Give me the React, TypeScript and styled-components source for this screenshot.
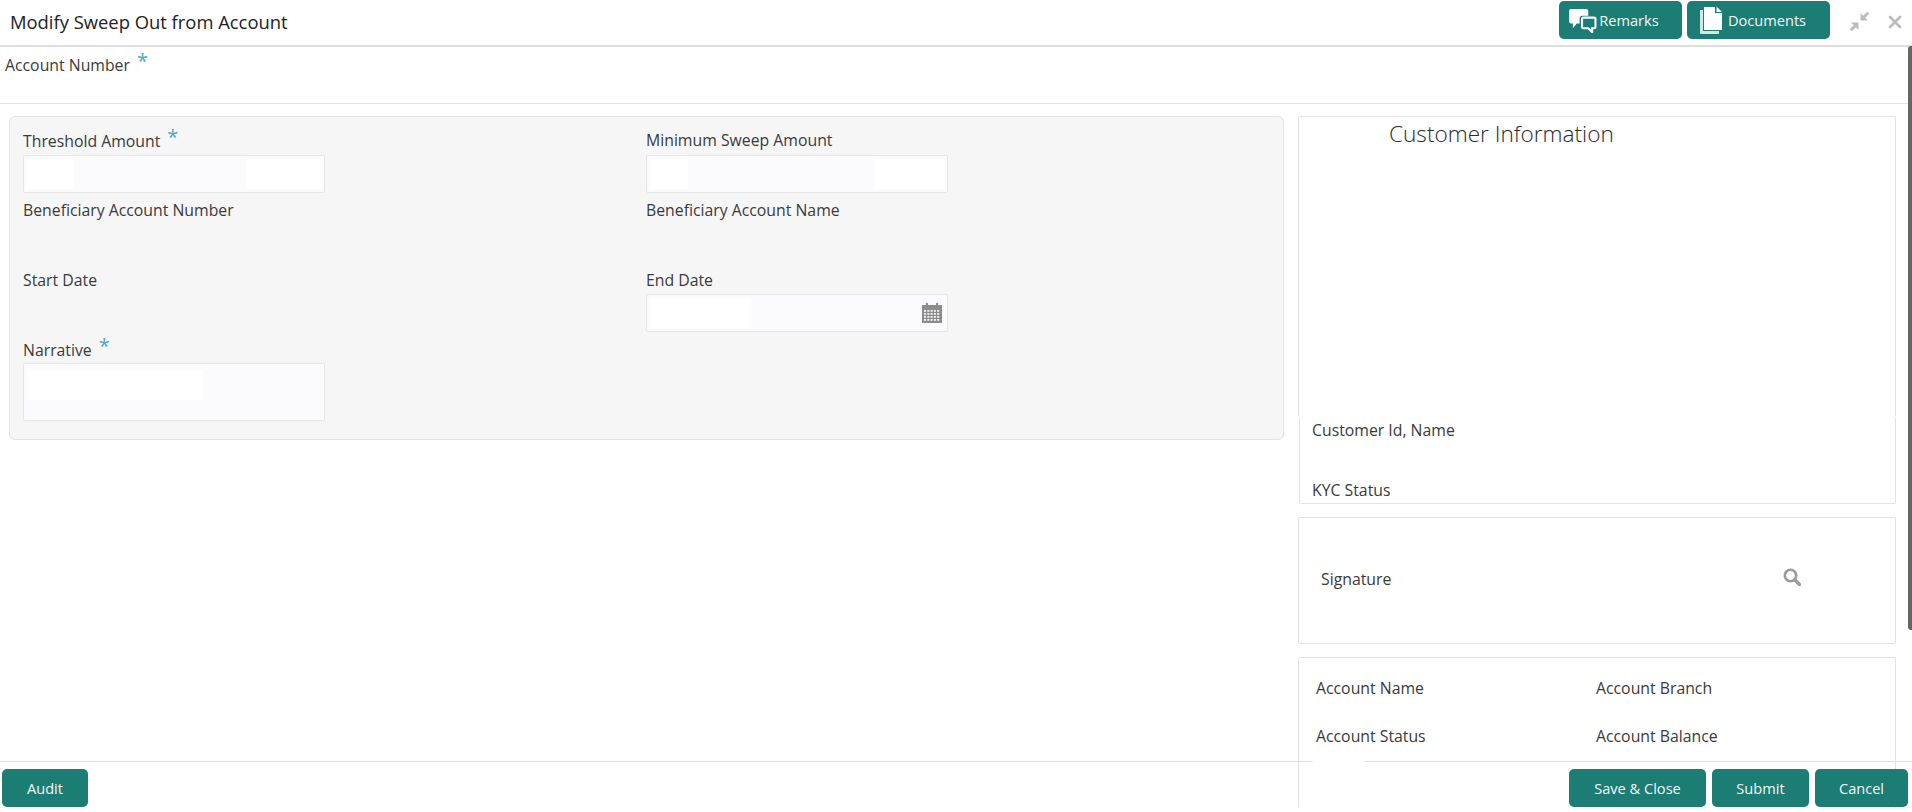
import React from "react";
import styled, { createGlobalStyle } from "styled-components";

const GlobalStyle = createGlobalStyle`
  html, body {
    margin: 0;
    padding: 0;
    height: 100%;
    background: #fff;
    overflow: hidden;
  }
  body {
    font-family: "Open Sans", "Noto Sans", sans-serif;
    color: #2c2c2c;
  }
`;

const Page = styled.div`
  position: relative;
  width: 1912px;
  height: 812px;
  overflow: hidden;
  display: flex;
  flex-direction: column;
`;

const Header = styled.header`
  height: 45px;
  flex: none;
  display: flex;
  align-items: center;
  justify-content: space-between;
  padding: 0 10px;
  border-bottom: 2px solid #dedede;
`;

const Title = styled.h1`
  margin: 0 0 2px;
  font-size: 18.4px;
  font-weight: 400;
  color: #222;
`;

const HeaderActions = styled.div`
  display: flex;
  align-items: center;
  gap: 5px;
  margin-bottom: 5px;
`;

const TealButton = styled.button<{ $w: number; $pr?: number }>`
  width: ${(p) => p.$w}px;
  height: 38px;
  border: none;
  border-radius: 5px;
  background: #1c7d75;
  color: #f1f8f7;
  font-family: inherit;
  font-size: 14.6px;
  display: flex;
  align-items: center;
  justify-content: center;
  padding: 0 ${(p) => p.$pr ?? 0}px 0 0;
`;

const WindowIcons = styled.div`
  display: flex;
  align-items: center;
  gap: 18px;
  margin-left: 14px;
  margin-top: 3px;
  color: #bcbcbc;
`;

const AccountRow = styled.div`
  height: 57px;
  flex: none;
  padding: 7px 0 0 5px;
  box-sizing: border-box;
  border-bottom: 1px solid #e4e4e4;
`;

const Label = styled.div`
  height: 20px;
  line-height: 20px;
  font-size: 15.8px;
  color: #3a3a3a;
  white-space: nowrap;
`;

const Star = styled.span`
  color: #4aa9c0;
  font-size: 20px;
  margin-left: 7px;
  position: relative;
  top: -3px;
  line-height: 1;
`;

const Main = styled.main`
  flex: 1;
  min-height: 0;
  display: flex;
  align-items: flex-start;
  gap: 14px;
  padding: 12px 0 0 9px;
`;

const Panel = styled.section`
  width: 1275px;
  flex: none;
  box-sizing: border-box;
  background: #f6f6f6;
  border: 1px solid #e3e3e3;
  border-radius: 6px;
  padding: 13px 0 18px 13px;
  display: grid;
  grid-template-columns: 623px 1fr;
  grid-template-rows: 70px 70px 69px auto;
`;

const Field = styled.div``;

const Input = styled.div<{ $bg: string; $h: number; $mt?: number }>`
  width: 302px;
  height: ${(p) => p.$h}px;
  margin-top: ${(p) => p.$mt ?? 4}px;
  box-sizing: border-box;
  border: 1px solid #e6e6e6;
  border-radius: 2px;
  background: ${(p) => p.$bg};
  display: flex;
  align-items: center;
  justify-content: flex-end;
  padding-right: 5px;
  color: #8a8a8a;
`;

const Side = styled.aside`
  width: 598px;
  flex: none;
  display: flex;
  flex-direction: column;
`;

const Card = styled.div`
  box-sizing: border-box;
  border: 1px solid #e2e2e2;
  border-radius: 2px;
  background: #fff;
`;

const InfoCard = styled(Card)`
  height: 301px;
  border-bottom: none;
  padding: 2px 0 0 90px;
`;

const InfoTitle = styled.div`
  font-size: 22.6px;
  font-weight: 300;
  line-height: 30px;
  color: #2a2a2a;
`;

const CustomerCard = styled(Card)`
  height: 87px;
  margin-left: 1px;
  border-top: none;
  padding: 0 0 0 12px;
`;

const CustomerLabel = styled(Label)<{ $top: number }>`
  margin-top: ${(p) => p.$top}px;
`;

const SignatureCard = styled(Card)`
  height: 127px;
  margin-top: 13px;
  display: flex;
  align-items: center;
  justify-content: space-between;
  padding: 0 94px 4px 22px;
`;

const SearchIcon = styled.svg`
  color: #9a9a9a;
  margin-top: -4px;
`;

const AccountCard = styled(Card)`
  height: 151px;
  margin-top: 13px;
  border-bottom: none;
  padding: 20px 0 0 17px;
  display: grid;
  grid-template-columns: 280px 1fr;
  grid-template-rows: 48px 48px;
`;

const Scrollbar = styled.div`
  position: absolute;
  top: 46px;
  right: 0;
  width: 4px;
  height: 584px;
  background: #666;
  border-radius: 3px 0 0 3px;
`;

const Footer = styled.footer`
  position: absolute;
  left: 0;
  right: 0;
  bottom: 0;
  height: 43px;
  border-top: 1px solid #dedede;
  display: flex;
  justify-content: space-between;
  padding: 7px 4px 0 2px;
`;

const FooterGroup = styled.div`
  display: flex;
  gap: 6px;
`;

// blurred-out account status value, sits over the footer rule
const ValueBlot = styled.div`
  position: absolute;
  left: 1313px;
  top: 751px;
  width: 52px;
  height: 16px;
  background: #fff;
`;

const patches = (
  base: string,
  rects: Array<[number, number, number, number]>
) =>
  [
    ...rects.map(
      ([x, y, w, h]) =>
        `linear-gradient(#fff, #fff) ${x}px ${y}px / ${w}px ${h}px no-repeat`
    ),
    `linear-gradient(${base}, ${base})`,
  ].join(", ");

function RemarksIcon() {
  return (
    <svg width="29" height="25" viewBox="0 0 30 26" style={{ marginRight: 2 }}>
      <path
        d="M3 1h16a2 2 0 0 1 2 2v5h-6a3 3 0 0 0-3 3v5H9l-4 5v-5H3a2 2 0 0 1-2-2V3a2 2 0 0 1 2-2z"
        fill="#fff"
      />
      <path
        d="M16 10h11a1.500 1.500 0 0 1 1.500 1.500v8a1.500 1.500 0 0 1-1.500 1.500h-2v4l-4-4h-5a1.500 1.500 0 0 1-1.500-1.500v-8a1.500 1.500 0 0 1 1.500-1.500z"
        fill="#1c7d75"
        stroke="#fff"
        strokeWidth="2.200"
      />
    </svg>
  );
}

function DocumentsIcon() {
  return (
    <svg width="24" height="29" viewBox="0 0 24 29" style={{ marginRight: 5 }}>
      <path d="M1 4h3v21h16v3H2a1 1 0 0 1-1-1z" fill="#cfe9e6" />
      <path d="M5 1h11v6h7v17H5z" fill="#fff" />
      <path d="M17.500 0.500l5.500 5.500h-5.500z" fill="#fff" />
    </svg>
  );
}

function CalendarIcon() {
  return (
    <svg width="20" height="20" viewBox="0 0 20 20" fill="#8c8c8c">
      <rect x="4" y="0" width="2" height="4" />
      <rect x="14" y="0" width="2" height="4" />
      <path d="M0 2h20v18H0z" />
      <g fill="#f4f4f4">
        {[0, 1, 2, 3].map((row) =>
          [0, 1, 2, 3, 4].map((col) => (
            <rect
              key={`${row}-${col}`}
              x={2 + col * 3.3}
              y={7 + row * 3}
              width="2"
              height="1.800"
            />
          ))
        )}
      </g>
    </svg>
  );
}

export default function App() {
  return (
    <Page>
      <GlobalStyle />
      <Header>
        <Title>Modify Sweep Out from Account</Title>
        <HeaderActions>
          <TealButton $w={123} $pr={14}>
            <RemarksIcon />
            Remarks
          </TealButton>
          <TealButton $w={143} $pr={12}>
            <DocumentsIcon />
            Documents
          </TealButton>
          <WindowIcons>
            <svg width="21" height="21" viewBox="0 0 20 20" fill="currentColor">
              <path d="M11 2v7h7l-2.500-2.500 3.800-3.800-2-2-3.800 3.800z" />
              <path d="M9 18v-7H2l2.500 2.500-3.800 3.800 2 2 3.800-3.800z" />
            </svg>
            <svg width="14" height="14" viewBox="0 0 14 14">
              <path
                d="M2 2l10 10M12 2L2 12"
                stroke="currentColor"
                strokeWidth="2.600"
                strokeLinecap="round"
              />
            </svg>
          </WindowIcons>
        </HeaderActions>
      </Header>

      <AccountRow>
        <Label>
          Account Number<Star>*</Star>
        </Label>
      </AccountRow>

      <Main>
        <Panel>
          <Field>
            <Label>
              Threshold Amount<Star>*</Star>
            </Label>
            <Input
              $h={38}
              $mt={5}
              $bg={patches("#fbfbfd", [
                [2, 3, 48, 30],
                [222, 3, 76, 30],
              ])}
            />
          </Field>
          <Field>
            <Label>Minimum Sweep Amount</Label>
            <Input
              $h={38}
              $mt={5}
              $bg={patches("#fbfbfd", [
                [3, 3, 38, 30],
                [227, 3, 70, 30],
              ])}
            />
          </Field>
          <Field>
            <Label>Beneficiary Account Number</Label>
          </Field>
          <Field>
            <Label>Beneficiary Account Name</Label>
          </Field>
          <Field>
            <Label>Start Date</Label>
          </Field>
          <Field>
            <Label>End Date</Label>
            <Input $h={38} $bg={patches("#fbfbfd", [[3, 3, 101, 30]])}>
              <CalendarIcon />
            </Input>
          </Field>
          <Field>
            <Label>
              Narrative<Star>*</Star>
            </Label>
            <Input $h={58} $bg={patches("#fbfbfd", [[3, 6, 176, 30]])} />
          </Field>
        </Panel>

        <Side>
          <InfoCard>
            <InfoTitle>Customer Information</InfoTitle>
          </InfoCard>
          <CustomerCard>
            <CustomerLabel $top={3}>Customer Id, Name</CustomerLabel>
            <CustomerLabel $top={40}>KYC Status</CustomerLabel>
          </CustomerCard>
          <SignatureCard>
            <Label>Signature</Label>
            <SearchIcon
              width="18"
              height="18"
              viewBox="0 0 18 18"
              fill="none"
              stroke="currentColor"
            >
              <circle cx="7.500" cy="7.500" r="5.700" strokeWidth="2.600" />
              <path d="M12 12l4.500 4.500" strokeWidth="3.200" strokeLinecap="round" />
            </SearchIcon>
          </SignatureCard>
          <AccountCard>
            <Label>Account Name</Label>
            <Label>Account Branch</Label>
            <Label>Account Status</Label>
            <Label>Account Balance</Label>
          </AccountCard>
        </Side>
      </Main>

      <Scrollbar />

      <Footer>
        <TealButton $w={86}>Audit</TealButton>
        <FooterGroup>
          <TealButton $w={137}>Save &amp; Close</TealButton>
          <TealButton $w={97}>Submit</TealButton>
          <TealButton $w={93}>Cancel</TealButton>
        </FooterGroup>
      </Footer>
      <ValueBlot />
    </Page>
  );
}
